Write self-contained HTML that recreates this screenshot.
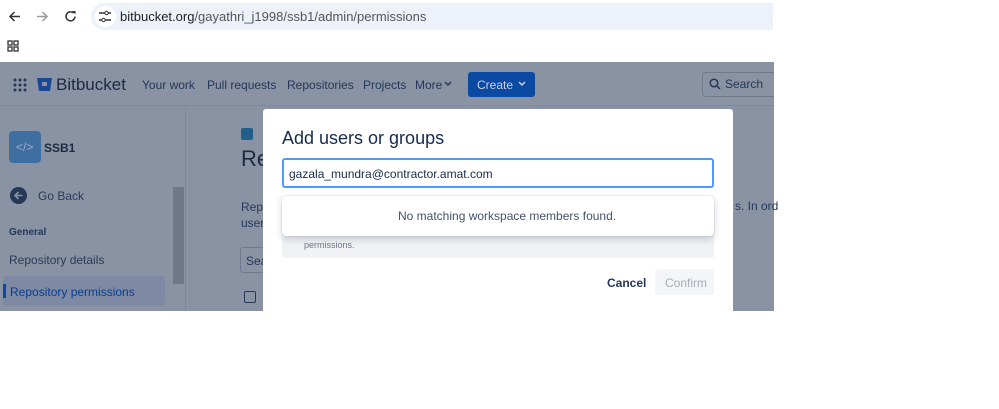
<!DOCTYPE html>
<html><head><style>
*{margin:0;padding:0;box-sizing:border-box}
body{width:999px;height:409px;background:#fff;font-family:"Liberation Sans",sans-serif;position:relative;overflow:hidden}
.a{position:absolute}
.t{white-space:nowrap}
</style></head><body>
<!-- browser chrome -->
<svg class="a" style="left:8px;top:10px" width="13" height="13"><path d="M12 6.5H2M6.5 2L2 6.5 6.5 11" fill="none" stroke="#333" stroke-width="1.5"/></svg>
<svg class="a" style="left:36px;top:10px" width="13" height="13"><path d="M1 6.5h10M6.5 2L11 6.5 6.5 11" fill="none" stroke="#999" stroke-width="1.5"/></svg>
<svg class="a" style="left:64px;top:10px" width="13" height="13"><path d="M11 6.5A4.5 4.5 0 1 1 9.5 3" fill="none" stroke="#333" stroke-width="1.5"/><path d="M8 1h3.5v3.5z" fill="#333"/></svg>
<div class="a" style="left:91px;top:3px;width:682px;height:27px;border-radius:14px 0 0 14px;background:#edf1f9"></div>
<div class="a" style="left:95px;top:6px;width:21px;height:21px;border-radius:50%;background:#fff"></div>
<svg class="a" style="left:98px;top:10px" width="14" height="13"><path d="M1 3h6M10 3h3M1 10h3M7 10h6" stroke="#333" stroke-width="1.4"/><circle cx="8.5" cy="3" r="1.7" fill="none" stroke="#333"/><circle cx="5.5" cy="10" r="1.7" fill="none" stroke="#333"/></svg>
<div class="a t" style="left:120px;top:9px;font-size:13px;color:#222">bitbucket.org<span style="color:#555">/gayathri_j1998/ssb1/admin/permissions</span></div>
<svg class="a" style="left:7px;top:40px" width="12" height="12"><g fill="none" stroke="#333" stroke-width="1.3"><rect x="1" y="1" width="4" height="4"/><rect x="7" y="1" width="4" height="4"/><rect x="1" y="7" width="4" height="4"/><rect x="7" y="7" width="4" height="4"/></g></svg>
<!-- app overlay -->
<div class="a" style="left:0;top:62px;width:774px;height:249px;background:#8a93a3;overflow:hidden">
<div class="a" style="left:0;top:0;width:774px;height:44px;background:#8993a3;border-bottom:1px solid #7f8899"></div>
<div class="a" style="left:702px;top:10px;width:80px;height:25px;border:1px solid #6f7a8d;border-radius:4px"></div>
<svg class="a" style="left:709px;top:16px" width="12" height="12"><circle cx="5" cy="5" r="3.8" fill="none" stroke="#253858" stroke-width="1.5"/><path d="M8 8l3 3" stroke="#253858" stroke-width="1.5"/></svg>
<div class="a t" style="left:725px;top:15px;font-size:12px;color:#253858">Search</div>
</div>
<svg class="a" style="left:13px;top:78px" width="14" height="14" fill="#253858"><circle cx="2" cy="2" r="1.5"/><circle cx="7" cy="2" r="1.5"/><circle cx="12" cy="2" r="1.5"/><circle cx="2" cy="7" r="1.5"/><circle cx="7" cy="7" r="1.5"/><circle cx="12" cy="7" r="1.5"/><circle cx="2" cy="12" r="1.5"/><circle cx="7" cy="12" r="1.5"/><circle cx="12" cy="12" r="1.5"/></svg>
<svg class="a" style="left:37px;top:77px" width="15" height="15"><path d="M0 1h15l-2 13H2z" fill="#1c4796"/><rect x="5" y="5" width="5" height="4" fill="#8993a3"/></svg>
<div class="a t" style="left:56px;top:75px;font-size:17px;color:#1d2a44">Bitbucket</div>
<div class="a t" style="left:142px;top:78px;font-size:12px;color:#253858">Your work</div>
<div class="a t" style="left:207px;top:78px;font-size:12px;color:#253858">Pull requests</div>
<div class="a t" style="left:287px;top:78px;font-size:12px;color:#253858">Repositories</div>
<div class="a t" style="left:363px;top:78px;font-size:12px;color:#253858">Projects</div>
<div class="a t" style="left:415px;top:78px;font-size:12px;color:#253858">More</div>
<svg class="a" style="left:444px;top:81px" width="8" height="6"><path d="M1 1l3 3 3-3" fill="none" stroke="#253858" stroke-width="1.5"/></svg>
<div class="a" style="left:468px;top:72px;width:67px;height:25px;background:#0b4aa2;border-radius:3px"></div>
<div class="a t" style="left:477px;top:78px;font-size:12px;color:#c8d3e6">Create</div>
<svg class="a" style="left:518px;top:81px" width="8" height="6"><path d="M1 1l3 3 3-3" fill="none" stroke="#c8d3e6" stroke-width="1.5"/></svg>
<!-- sidebar -->
<div class="a" style="left:185px;top:106px;width:1px;height:205px;background:#7f8899"></div>
<div class="a" style="left:9px;top:131px;width:32px;height:32px;border-radius:4px;background:#3e6fa0"></div>
<div class="a t" style="left:16px;top:140px;font-size:12px;color:#aac">&lt;/&gt;</div>
<div class="a t" style="left:44px;top:141px;font-size:12px;font-weight:bold;color:#1d2a44">SSB1</div>
<div class="a" style="left:10px;top:187px;width:17px;height:17px;border-radius:50%;background:#253858"></div>
<svg class="a" style="left:13px;top:190px" width="11" height="11"><path d="M9.5 5.5H2M5.5 2L2 5.5 5.5 9" fill="none" stroke="#8a93a3" stroke-width="1.6"/></svg>
<div class="a t" style="left:38px;top:189px;font-size:12px;color:#2b3a58">Go Back</div>
<div class="a" style="left:173px;top:187px;width:11px;height:97px;background:#6e7889"></div>
<div class="a t" style="left:9px;top:227px;font-size:10px;font-weight:bold;color:#253858">General</div>
<div class="a t" style="left:9px;top:253px;font-size:12px;color:#2b3a58">Repository details</div>
<div class="a" style="left:3px;top:276px;width:162px;height:30px;background:#7e8aa4;border-radius:3px"></div>
<div class="a" style="left:3px;top:284px;width:3px;height:14px;background:#0b4aa2"></div>
<div class="a t" style="left:10px;top:285px;font-size:12px;color:#0b3d8c">Repository permissions</div>
<!-- main bg bits -->
<div class="a" style="left:241px;top:128px;width:12px;height:12px;background:#1f5f8a;border-radius:2px"></div>
<div class="a t" style="left:241px;top:146px;font-size:22px;color:#1d2a44">Re</div>
<div class="a t" style="left:241px;top:199px;font-size:12px;line-height:16px;color:#253858">Repo<br>users</div>
<div class="a t" style="left:735px;top:199px;font-size:12px;color:#253858">s. In ord</div>
<div class="a" style="left:240px;top:247px;width:30px;height:26px;border:1px solid #6f7a8d;border-radius:3px"></div>
<div class="a t" style="left:246px;top:254px;font-size:12px;color:#253858">Sea</div>
<div class="a" style="left:244px;top:291px;width:12px;height:12px;border:1.5px solid #253858;border-radius:2px"></div>
<!-- modal -->
<div class="a" style="left:263px;top:109px;width:470px;height:202px;background:#fff;border-radius:3px 3px 0 0"></div>
<div class="a t" style="left:282px;top:128px;font-size:18px;color:#172b4d">Add users or groups</div>
<div class="a" style="left:282px;top:158px;width:432px;height:30px;border:2px solid #4c9aff;border-radius:3px"></div>
<div class="a t" style="left:289px;top:167px;font-size:12px;color:#172b4d">gazala_mundra@contractor.amat.com</div>
<div class="a" style="left:282px;top:228px;width:432px;height:30px;background:#f1f2f4;border-radius:3px"></div>
<div class="a t" style="left:304px;top:240px;font-size:9px;color:#6b778c">permissions.</div>
<div class="a" style="left:282px;top:196px;width:432px;height:40px;background:#fff;border-radius:4px;box-shadow:0 3px 8px rgba(9,30,66,.2),0 0 1px rgba(9,30,66,.3)"></div>
<div class="a t" style="left:398px;top:209px;font-size:12px;color:#42526e">No matching workspace members found.</div>
<div class="a t" style="left:607px;top:276px;font-size:12px;font-weight:bold;color:#253858">Cancel</div>
<div class="a" style="left:655px;top:269px;width:59px;height:26px;background:#f4f5f7;border-radius:3px"></div>
<div class="a t" style="left:665px;top:276px;font-size:12px;color:#a5adba">Confirm</div>
</body></html>
